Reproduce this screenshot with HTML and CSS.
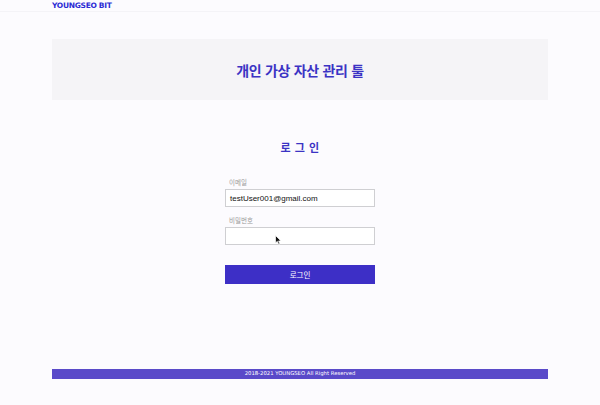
FILE: index.html
```html
<!DOCTYPE html>
<html lang="ko">
<head>
<meta charset="utf-8">
<link rel="stylesheet" href="styles.css">
</head>
<body>
<header class="topbar">
  <span class="brand">YOUNGSEO BIT</span>
</header>
<section class="banner">
  <h1 class="banner-title">개인 가상 자산 관리 툴</h1>
</section>
<main class="login">
  <h2 class="login-title">로 그 인</h2>
  <form class="form">
    <label class="label">이메일</label>
    <div class="input">testUser001@gmail.com</div>
    <label class="label">비밀번호</label>
    <div class="input input-pw">
      <svg class="cursor" width="7" height="10" viewBox="0 0 7 10"><path d="M0.5 0.5 L0.5 8 L2.3 6.3 L3.6 9.3 L4.8 8.8 L3.6 5.9 L6 5.9 Z" fill="#111" stroke="#fff" stroke-width="0.7"/></svg>
    </div>
    <div class="button">로그인</div>
  </form>
</main>
<footer class="footer">2018-2021 YOUNGSEO All Right Reserved</footer>
</body>
</html>
```
FILE: styles.css
```css
html, body {
  margin: 0;
  padding: 0;
}
body {
  width: 600px;
  height: 405px;
  background: #fcfbfe;
  font-family: "Noto Sans CJK KR", "Noto Sans", sans-serif;
  display: flex;
  flex-direction: column;
}
.topbar {
  height: 11px;
  padding-left: 52px;
  border-bottom: 1px solid #f4f3f7;
  display: flex;
  align-items: center;
}
.brand {
  font-family: "DejaVu Sans", sans-serif;
  font-weight: bold;
  font-size: 7.5px;
  color: #2b2bd4;
  letter-spacing: -0.3px;
  line-height: 1;
  margin-top: 1px;
}
.banner {
  margin: 27px 52px 0;
  height: 61px;
  background: #f5f4f7;
  display: flex;
  align-items: center;
  justify-content: center;
}
.banner-title {
  margin: 0;
  font-size: 14px;
  font-weight: bold;
  color: #3b33c4;
  letter-spacing: -0.3px;
  line-height: 1;
}
.login {
  display: flex;
  flex-direction: column;
  align-items: center;
  padding-top: 42px;
}
.login-title {
  margin: 0;
  font-size: 11px;
  font-weight: bold;
  color: #3b33c4;
  line-height: 1;
  letter-spacing: 0.5px;
}
.form {
  width: 150px;
  margin-top: 25px;
  display: flex;
  flex-direction: column;
}
.label {
  font-size: 6.5px;
  color: #9a9a9a;
  padding-left: 4px;
  line-height: 8px;
  height: 8px;
  margin-bottom: 3px;
}
.input {
  box-sizing: border-box;
  height: 18px;
  border: 1px solid #cfcfd2;
  background: #ffffff;
  font-family: "Liberation Sans", sans-serif;
  font-size: 8px;
  color: #111;
  padding-left: 4px;
  display: flex;
  align-items: center;
  margin-bottom: 9px;
  position: relative;
}
.input-pw {
  margin-bottom: 20px;
}
.cursor {
  position: absolute;
  left: 49px;
  top: 7px;
}
.button {
  height: 19px;
  background: #3d2fc6;
  color: #ffffff;
  font-size: 7.5px;
  display: flex;
  align-items: center;
  justify-content: center;
}
.footer {
  margin: auto 52px 26px;
  height: 10px;
  background: #5a4ac9;
  color: #ffffff;
  font-family: "DejaVu Sans", sans-serif;
  font-weight: normal;
  font-size: 5.3px;
  display: flex;
  align-items: center;
  justify-content: center;
  line-height: 1;
}
```
